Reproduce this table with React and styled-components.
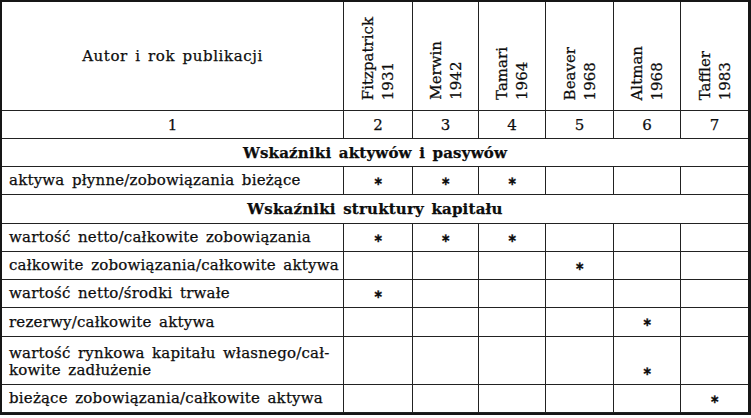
import React from "react";
import styled, { createGlobalStyle } from "styled-components";

const GlobalStyle = createGlobalStyle`
  html, body {
    margin: 0;
    padding: 0;
    background: #ffffff;
  }
  body {
    font-family: "DejaVu Serif", "Liberation Serif", serif;
    color: #0d0d0d;
  }
`;

const Sheet = styled.div`
  display: grid;
  grid-template-columns: 342px 69px 66px 67px 68px 67px 67px;
  width: 746px;
  border: solid #161616;
  border-width: 2px 3px 2px 2px;
  font-size: 15px;
  -webkit-text-stroke: 0.25px #0d0d0d;
`;

const Cell = styled.div`
  box-sizing: border-box;
  height: ${(p) => p.$h || 28}px;
  border-bottom: 1px solid #222;
  border-right: ${(p) => (p.$last ? "none" : "1px solid #222")};
  display: flex;
  align-items: center;
  justify-content: center;
`;

const AuthorHead = styled(Cell)`
  height: 109px;
  letter-spacing: 0.6px;
  word-spacing: 2px;
`;

const NameHead = styled(Cell)`
  height: 109px;
  align-items: flex-end;
  padding-bottom: 10px;
`;

const RotatedLabel = styled.div`
  writing-mode: vertical-rl;
  transform: rotate(180deg);
  line-height: 20px;
  white-space: nowrap;
`;

const SectionCell = styled(Cell)`
  grid-column: 1 / -1;
  border-right: none;
  font-weight: bold;
  letter-spacing: 0.2px;
  word-spacing: 2px;
`;

const LabelCell = styled(Cell)`
  flex-direction: column;
  align-items: flex-start;
  justify-content: ${(p) => (p.$bottom ? "flex-end" : "center")};
  padding: 0 4px ${(p) => (p.$bottom ? 5 : 0)}px 7px;
  line-height: 17px;
  letter-spacing: 0.2px;
  word-spacing: 2.5px;
  white-space: nowrap;
`;

const MarkCell = styled(Cell)`
  align-items: ${(p) => (p.$bottom ? "flex-end" : "center")};
  padding-bottom: ${(p) => (p.$bottom ? 6 : 0)}px;
`;

const Star = styled.span`
  font-family: "DejaVu Sans", sans-serif;
  font-weight: bold;
  font-size: 12px;
  line-height: 14px;
`;

const authors = [
  ["Fitzpatrick", "1931"],
  ["Merwin", "1942"],
  ["Tamari", "1964"],
  ["Beaver", "1968"],
  ["Altman", "1968"],
  ["Taffler", "1983"],
];

const sections = [
  {
    title: "Wskaźniki aktywów i pasywów",
    rows: [{ label: "aktywa płynne/zobowiązania bieżące", marks: [0, 1, 2] }],
  },
  {
    title: "Wskaźniki struktury kapitału",
    h: 29,
    rows: [
      { label: "wartość netto/całkowite zobowiązania", marks: [0, 1, 2] },
      { label: "całkowite zobowiązania/całkowite aktywa", marks: [3] },
      { label: "wartość netto/środki trwałe", marks: [0] },
      { label: "rezerwy/całkowite aktywa", marks: [4], h: 29 },
      {
        label: ["wartość rynkowa kapitału własnego/cał-", "kowite zadłużenie"],
        marks: [4],
        h: 48,
      },
      { label: "bieżące zobowiązania/całkowite aktywa", marks: [5] },
    ],
  },
];

export default function App() {
  return (
    <>
      <GlobalStyle />
      <Sheet>
        <AuthorHead>Autor i rok publikacji</AuthorHead>
        {authors.map(([name, year], c) => (
          <NameHead key={name} $last={c === authors.length - 1}>
            <RotatedLabel>
              {name}
              <br />
              {year}
            </RotatedLabel>
          </NameHead>
        ))}

        {[1, 2, 3, 4, 5, 6, 7].map((n) => (
          <Cell key={n} $last={n === 7}>
            {n}
          </Cell>
        ))}

        {sections.map((section) => (
          <React.Fragment key={section.title}>
            <SectionCell $h={section.h}>{section.title}</SectionCell>
            {section.rows.map((row, i) => {
              const multi = Array.isArray(row.label);
              return (
                <React.Fragment key={i}>
                  <LabelCell $h={row.h} $bottom={multi}>
                    {multi
                      ? row.label.map((line, j) => <div key={j}>{line}</div>)
                      : row.label}
                  </LabelCell>
                  {authors.map((_, c) => (
                    <MarkCell
                      key={c}
                      $h={row.h}
                      $bottom={multi}
                      $last={c === authors.length - 1}
                    >
                      {row.marks.includes(c) && <Star>∗</Star>}
                    </MarkCell>
                  ))}
                </React.Fragment>
              );
            })}
          </React.Fragment>
        ))}
      </Sheet>
    </>
  );
}
